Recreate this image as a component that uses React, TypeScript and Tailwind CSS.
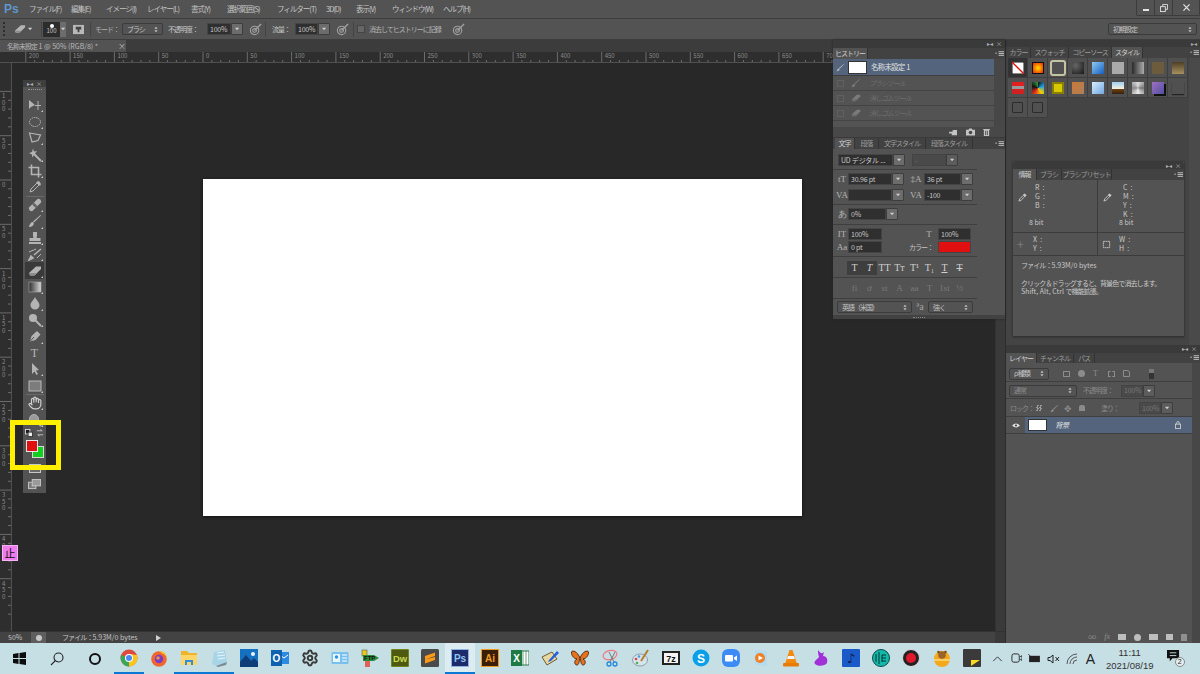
import React from "react";
import { Hand, Settings } from "lucide-react";

const J = "text-[7px] tracking-[-1px]";
const L = "tracking-[0px]";

function Caret() {
  return <svg viewBox="0 0 6 4" className="w-[5px] h-[4px]"><path d="M0 0.5 L5 0.5 L2.5 3.5Z" fill="#d0d0d0" /></svg>;
}
function Updown() {
  return (
    <svg viewBox="0 0 5 8" className="w-[4px] h-[7px] shrink-0">
      <path d="M0.5 3 L2.5 0.5 L4.5 3Z M0.5 5 L2.5 7.5 L4.5 5Z" fill="#c8c8c8" />
    </svg>
  );
}
function Chev() {
  return (
    <div className="flex items-center gap-[3px] text-[6px] leading-none text-[#b0b0b0]">
      <span>▸◂</span>
      <span>×</span>
    </div>
  );
}
function PanelMenu() {
  return (
    <svg viewBox="0 0 10 6" className="w-[9px] h-[6px]">
      <path d="M0 1.5 L2.5 1.5 L1.2 3Z" fill="#ccc" />
      <path d="M4 0.5 H10 M4 2.5 H10 M4 4.5 H10" stroke="#ccc" strokeWidth="1" />
    </svg>
  );
}

function EraserIcon({ className }: { className: string }) {
  return (
    <svg viewBox="0 0 14 14" className={className}>
      <path d="M1 9 L8 2.5 L13 2.5 L13 5 L6.5 11.5 L2 11.5Z" fill="#b4b4b4" />
      <path d="M1 9 L2.5 11.5 L6.5 11.5 L9 9Z" fill="#8d8d8d" />
    </svg>
  );
}
function BrushIcon({ className }: { className: string }) {
  return (
    <svg viewBox="0 0 14 14" className={className}>
      <path d="M12.5 1 L13 1.5 L6 8.5 L5 7.5Z" fill="#b8b8b8" />
      <path d="M1 13 C1.5 10 3 8 4.8 8 L5.8 9 C6 11 4 13 1 13Z" fill="#b8b8b8" />
    </svg>
  );
}
function TargetBrush() {
  return (
    <svg viewBox="0 0 14 14" className="w-[13px] h-[13px]" fill="none" stroke="#a0a0a0" strokeWidth="1.2">
      <circle cx="6" cy="8" r="4.5" />
      <circle cx="6" cy="8" r="2" />
      <path d="M6 8 L13 1" strokeWidth="1.5" />
    </svg>
  );
}

const g = "#b4b4b4";
const tools: React.ReactNode[] = [
  <svg key="0" viewBox="0 0 14 14" className="w-[14px] h-[14px]"><path d="M1 2 L1 11 L3 9 L7 7Z" fill={g} /><path d="M10 3 V12 M7 7.5 H13" stroke={g} /></svg>,
  <svg key="1" viewBox="0 0 14 14" className="w-[14px] h-[14px]"><ellipse cx="7" cy="7" rx="5.5" ry="4.5" fill="none" stroke={g} strokeDasharray="1.5 0.7" /></svg>,
  <svg key="2" viewBox="0 0 14 14" className="w-[14px] h-[14px]"><path d="M1.5 2 L12.5 4 L10 9.5 L4 11 Z" fill="none" stroke={g} strokeWidth="1.2" /></svg>,
  <svg key="3" viewBox="0 0 14 14" className="w-[14px] h-[14px]"><path d="M6 6 L13 13" stroke={g} strokeWidth="2" /><path d="M5 0.5 L6 3.5 L9 3 L7 5.5 L9 8 L6 7 L4 9.5 L4 6.5 L1 5 L4 4Z" fill={g} /></svg>,
  <svg key="4" viewBox="0 0 14 14" className="w-[14px] h-[14px]"><path d="M3.5 0.5 V10.5 H13.5 M0.5 3.5 H10.5 V13.5" fill="none" stroke={g} strokeWidth="1.6" /></svg>,
  <svg key="5" viewBox="0 0 14 14" className="w-[14px] h-[14px]"><path d="M2 12 L3 9 L9 3 L11 5 L5 11Z" fill="none" stroke={g} /><path d="M8 2 L12 6 L13 4 L11 1Z" fill={g} /></svg>,
  <svg key="6" viewBox="0 0 14 14" className="w-[14px] h-[14px]"><path d="M1 9.5 L9.5 1 Q11 0.5 12.5 1.8 Q13.5 3.2 13 4.5 L4.5 13 Q3 13.5 1.5 12.2 Q0.5 11 1 9.5Z" fill={g} /><path d="M5 5.5 L8.5 9" stroke="#666" strokeWidth="2.5" /></svg>,
  <BrushIcon key="7" className="w-[14px] h-[14px]" />,
  <svg key="8" viewBox="0 0 14 14" className="w-[14px] h-[14px]"><path d="M5 1 H9 V5 L8.5 7 H12.5 V10 H1.5 V7 H5.5 L5 5Z M1 11 H13 V13 H1Z" fill={g} /></svg>,
  <svg key="9" viewBox="0 0 14 14" className="w-[14px] h-[14px]"><path d="M1 13 L3 9 L5 11Z M6 8 L13 2" stroke={g} strokeWidth="1.6" fill={g} /><path d="M1 5 L8 2 M9 11 L13 7" stroke={g} /></svg>,
  <EraserIcon key="10" className="w-[14px] h-[14px]" />,
  <svg key="11" viewBox="0 0 14 14" className="w-[14px] h-[14px]"><defs><linearGradient id="tg"><stop offset="0" stopColor="#2f2f2f" /><stop offset="1" stopColor="#d8d8d8" /></linearGradient></defs><rect x="1" y="2" width="12" height="10" fill="url(#tg)" stroke="#aaa" strokeWidth="0.6" /></svg>,
  <svg key="12" viewBox="0 0 14 14" className="w-[14px] h-[14px]"><path d="M7 1 C8 4 11.5 6 11.5 9 A4.5 4.5 0 0 1 2.5 9 C2.5 6 6 4 7 1Z" fill={g} /></svg>,
  <svg key="13" viewBox="0 0 14 14" className="w-[14px] h-[14px]"><circle cx="5" cy="5" r="4" fill={g} /><path d="M7 7 L13 13" stroke={g} strokeWidth="2" /></svg>,
  <svg key="14" viewBox="0 0 14 14" className="w-[14px] h-[14px]"><path d="M2 12.5 L3.5 7 L9 2 L12.5 5.5 L7.5 11Z" fill={g} /><path d="M2 12.5 L6 8" stroke="#555" /></svg>,
  <span key="15" className="text-[12px] leading-none text-[#b4b4b4] [font-family:'Liberation_Serif',serif]">T</span>,
  <svg key="16" viewBox="0 0 14 14" className="w-[14px] h-[14px]"><path d="M4 1 L4 12 L6.5 9.5 L8.5 13 L10 12 L8 8.5 L11 8Z" fill={g} /></svg>,
  <svg key="17" viewBox="0 0 14 14" className="w-[14px] h-[14px]"><rect x="1" y="2" width="12" height="10" fill="#7c7c7c" stroke="#b8b8b8" /></svg>,
  <Hand key="18" className="w-[14px] h-[14px]" color="#d0d0d0" strokeWidth={2} />,
  <svg key="19" viewBox="0 0 14 14" className="w-[14px] h-[14px]"><circle cx="6" cy="6" r="4.5" fill="#9a9a9a" stroke={g} /><path d="M9 9 L13 13" stroke={g} strokeWidth="2" /></svg>,
];

function Toolbar() {
  return (
    <div className="absolute left-[23px] top-[80px] w-[23px] h-[413px] bg-[#535353] flex flex-col items-center">
      <div className="w-full h-[7px] bg-[#3e3e3e] flex items-center justify-center"><Chev /></div>
      <div className="w-[14px] h-[2px] mt-[2px] mb-[6px] border-t border-dotted border-[#999]" />
      {tools.map((t, i) => (
        <React.Fragment key={i}>
          {i === 6 || i === 18 ? <div className="w-[18px] h-0 border-t border-[#6a6a6a]" /> : null}
          <div className={i === 10 ? "relative w-[19px] h-[16.45px] flex items-center justify-center bg-[#3a3a3a] rounded-[1px]" : "relative w-[19px] h-[16.45px] flex items-center justify-center"}>
            {t}
            {i !== 5 && i !== 15 ? <div className="absolute right-[1px] bottom-[1px] w-0 h-0 border-l-[2px] border-l-transparent border-b-[2px] border-b-[#ccc]" /> : null}
          </div>
        </React.Fragment>
      ))}
      <div className="w-full h-[9px] mt-[1px] flex items-center justify-between px-[2px]">
        <svg viewBox="0 0 9 9" className="w-[8px] h-[8px]"><rect x="0.5" y="0.5" width="5" height="5" fill="#1b1b1b" stroke="#ddd" /><rect x="3.5" y="3.5" width="5" height="5" fill="#eee" stroke="#333" /></svg>
        <svg viewBox="0 0 9 9" className="w-[8px] h-[8px]" fill="none" stroke="#c8c8c8"><path d="M1 2 H7 L5 0.5 M8 6.5 H2 L4 8" /></svg>
      </div>
      <div className="relative w-full h-[24px] mt-[1px]">
        <div className="absolute left-[9px] top-[7px] w-[12px] h-[12px] bg-[#12d01e] border border-[#d8d8d8]" />
        <div className="absolute left-[3px] top-[1px] w-[12px] h-[12px] bg-[#e01010] border border-[#e8e8e8]" />
      </div>
      <div className="w-[12px] h-[9px] mt-[1px] bg-[#6a6a6a] border border-[#c8c8c8] flex items-center justify-center">
        <div className="w-[4px] h-[4px] rounded-full bg-[#d0d0d0]" />
      </div>
      <svg viewBox="0 0 14 12" className="w-[13px] h-[11px] mt-[6px]"><rect x="0.5" y="3.5" width="8" height="7" fill="#7d7d7d" stroke="#c8c8c8" /><rect x="4.5" y="0.5" width="9" height="7" fill="#9a9a9a" stroke="#c8c8c8" /></svg>
    </div>
  );
}

function Field({ w, text, btn = true, dis = false }: { w: string; text?: string; btn?: boolean; dis?: boolean }) {
  return (
    <div className="flex h-[12px] shrink-0">
      <div className={w + (dis ? " bg-[#4a4a4a] text-[#777] " : " bg-[#2f2f2f] text-[#c8c8c8] ") + "border border-[#444] flex items-center pl-[2px] text-[7px] tracking-[-0.2px] leading-none whitespace-nowrap overflow-hidden"}>{text}</div>
      {btn ? <div className={(dis ? "bg-[#5c5c5c] " : "bg-[#6c6c6c] ") + "w-[12px] border border-[#3d3d3d] rounded-r-[1px] flex items-center justify-center"}><Caret /></div> : null}
    </div>
  );
}
function Select({ w, text, dis = false }: { w: string; text: string; dis?: boolean }) {
  return (
    <div className={w + (dis ? " text-[#8a8a8a] " : " text-[#c4c4c4] ") + "h-[12px] bg-[#535353] border border-[#3b3b3b] rounded-[2px] flex items-center justify-between px-[4px] text-[7px] tracking-[-1px] leading-none whitespace-nowrap"}>
      <span>{text}</span>
      <Updown />
    </div>
  );
}
const Sep = ({ m }: { m: string }) => <div className={m + " w-[144px] h-[1px] bg-[#3f3f3f]"} />;
const Glyph = ({ t, cls = "" }: { t: string; cls?: string }) => (
  <span className={cls + " w-[12px] text-center text-[9px] leading-none text-[#b4b4b4] [font-family:'Liberation_Serif',serif]"}>{t}</span>
);

function Tab({ t, on = false, cls = "" }: { t: string; on?: boolean; cls?: string }) {
  return (
    <div className={cls + (on ? " bg-[#535353] text-[#cfcfcf] " : " bg-[#424242] text-[#9a9a9a] ") + "h-full flex items-center justify-center border-r border-[#333] text-[7px] tracking-[-1px] leading-none whitespace-nowrap"}>
      {t}
    </div>
  );
}

function HistRow({ t, icon }: { t: string; icon: React.ReactNode }) {
  return (
    <div className={J + " h-[15px] flex items-center border-b border-[#444] italic text-[#6e6e6e]"}>
      <div className="ml-[4px] w-[7px] h-[7px] border border-[#606060] mr-[7px]" />
      <div className="w-[10px] h-[10px] flex items-center justify-center opacity-40">{icon}</div>
      <span className="ml-[8px]">{t}</span>
    </div>
  );
}

function HistoryChar() {
  const ts = ["T", "T", "TT", "Tт", "T¹", "T₁", "T", "T"];
  const lg = ["fi", "ơ", "st", "A", "aa", "T", "1st", "½"];
  return (
    <div className="absolute left-[833px] top-[40px] w-[172px] h-[279px] bg-[#535353] flex flex-col shadow-[0_0_2px_#222]">
      <div className="h-[8px] bg-[#3a3a3a] flex items-center justify-end pr-[3px]"><Chev /></div>
      <div className="h-[11px] bg-[#424242] flex items-center">
        <Tab t="ヒストリー" on cls="w-[35px]" />
        <div className="ml-auto mr-[1px]"><PanelMenu /></div>
      </div>
      <div className="h-[68px] flex">
        <div className="w-[161px]">
          <div className="h-[17px] bg-[#53647c] flex items-center border-b border-[#3e3e3e]">
            <BrushIcon className="ml-[3px] w-[9px] h-[9px]" />
            <div className="ml-[3px] w-[19px] h-[13px] bg-white border border-[#333]" />
            <span className="ml-[4px] text-[7.5px] tracking-[-0.8px] text-[#e0e0e0] leading-none">名称未設定<span className={L}> 1</span></span>
          </div>
          <HistRow t="ブラシツール" icon={<BrushIcon className="w-[10px] h-[10px]" />} />
          <HistRow t="消しゴムツール" icon={<EraserIcon className="w-[10px] h-[10px]" />} />
          <HistRow t="消しゴムツール" icon={<EraserIcon className="w-[10px] h-[10px]" />} />
        </div>
        <div className="flex-1 bg-[#474747]" />
      </div>
      <div className="h-[10px] bg-[#484848] flex items-center justify-end gap-[8px] pr-[15px]">
        <svg viewBox="0 0 10 8" className="w-[9px] h-[7px]"><path d="M0 3 L4 3 L4 1 L9 1 L9 7 L3 7 L3 5 L0 5Z" fill="#c4c4c4" /></svg>
        <svg viewBox="0 0 10 8" className="w-[9px] h-[8px]"><path d="M0 1.5 H3 L3.5 0 H6.5 L7 1.5 H10 V8 H0Z" fill="#c4c4c4" /><circle cx="5" cy="4.5" r="2" fill="#484848" /></svg>
        <svg viewBox="0 0 8 9" className="w-[7px] h-[8px]"><path d="M0 1 H8 V2 H7 V9 H1 V2 H0Z" fill="#c4c4c4" /><path d="M3 3 V8 M5 3 V8" stroke="#484848" /></svg>
      </div>
      <div className="h-[12px] bg-[#424242] flex items-center border-t border-[#3a3a3a]">
        <Tab t="文字" on cls="w-[20px] ml-[2px]" />
        <Tab t="段落" cls="w-[24px]" />
        <Tab t="文字スタイル" cls="w-[47px]" />
        <Tab t="段落スタイル" cls="w-[47px]" />
        <div className="ml-auto mr-[1px]"><PanelMenu /></div>
      </div>
      <div className="flex ml-[5px] mt-[5px]">
        <Field w="w-[55px]" text="UD デジタル ..." />
        <div className="ml-[7px]"><Field w="w-[34px]" text="-" dis /></div>
      </div>
      <Sep m="mt-[3px]" />
      <div className="flex items-center mt-[3px] ml-[3px]">
        <Glyph t="tT" />
        <Field w="w-[44px]" text="30.96 pt" />
        <Glyph t="‡A" cls="ml-[6px]" />
        <div className="ml-[2px]"><Field w="w-[37px]" text="36 pt" /></div>
      </div>
      <div className="flex items-center mt-[4px] ml-[3px]">
        <Glyph t="VA" />
        <Field w="w-[44px]" />
        <Glyph t="VA" cls="ml-[6px]" />
        <div className="ml-[2px]"><Field w="w-[37px]" text="-100" /></div>
      </div>
      <Sep m="mt-[3px]" />
      <div className="flex items-center mt-[3px] ml-[3px]">
        <Glyph t="あ" />
        <Field w="w-[38px]" text="0%" />
      </div>
      <Sep m="mt-[4px]" />
      <div className="flex items-center mt-[3px] ml-[3px]">
        <Glyph t="IT" />
        <Field w="w-[34px]" text="100%" btn={false} />
        <Glyph t="T" cls="ml-[41px]" />
        <div className="ml-[3px]"><Field w="w-[33px]" text="100%" btn={false} /></div>
      </div>
      <div className="flex items-center mt-[1px] ml-[3px]">
        <Glyph t="Aa" />
        <Field w="w-[34px]" text="0 pt" btn={false} />
        <span className={J + " ml-[27px] w-[25px] text-[#c4c4c4] leading-none whitespace-nowrap"}>カラー：</span>
        <div className="ml-[4px] w-[33px] h-[12px] bg-[#e01010] border border-[#444]" />
      </div>
      <Sep m="mt-[3px]" />
      <div className="flex items-center ml-[14px] mt-[4px] h-[14px]">
        {ts.map((t, i) => (
          <div key={i} className={(i < 2 ? "bg-[#3e3e3e] " : "") + (i === 1 ? "italic " : "") + (i === 6 ? "underline " : "") + (i === 7 ? "line-through " : "") + "w-[15px] h-[14px] flex items-center justify-center text-[10px] leading-none text-[#cfcfcf] [font-family:'Liberation_Serif',serif]"}>{t}</div>
        ))}
      </div>
      <Sep m="mt-[2px]" />
      <div className="flex items-center ml-[14px] mt-[3px] h-[14px]">
        {lg.map((t, i) => (
          <div key={i} className="w-[15px] flex items-center justify-center text-[9px] leading-none text-[#7a7a7a] [font-family:'Liberation_Serif',serif]">{t}</div>
        ))}
      </div>
      <Sep m="mt-[3px]" />
      <div className="flex items-center mt-[2px] ml-[4px]">
        <Select w="w-[75px]" text="英語（米国）" />
        <span className="w-[16px] text-center text-[8px] text-[#aaa] leading-none">ªa</span>
        <Select w="w-[45px]" text="強く" />
      </div>
      <div className="mt-auto h-[4px] bg-[#424242] flex items-center justify-center">
        <div className="w-[12px] border-t border-dotted border-[#888]" />
      </div>
    </div>
  );
}

const swatchCls = [
  "",
  "bg-[radial-gradient(circle,#ffe000,#f02000)] border border-[#111]",
  "",
  "bg-[radial-gradient(circle_at_30%_30%,#666,#181818)]",
  "bg-[linear-gradient(135deg,#90c8f0,#1560c0)]",
  "bg-[#aaaaaa]",
  "bg-[linear-gradient(90deg,#2a2a2a,#aaaaaa)]",
  "bg-[#6c5b3c]",
  "bg-[linear-gradient(180deg,#4e3f24,#a89060)]",
  "bg-[linear-gradient(180deg,#e02020_0%,#e02020_35%,#999_35%,#999_55%,#d02020_55%)]",
  "bg-[conic-gradient(#111,#20a0e0,#f0d000,#e03020,#111,#30a040)]",
  "bg-[#d8c800] border-2 border-[#8a8000]",
  "bg-[linear-gradient(135deg,#c87838,#b08058)]",
  "bg-[linear-gradient(135deg,#d8ecfa,#70a8e0)]",
  "bg-[linear-gradient(180deg,#a0d0f0_0%,#f0f0e0_55%,#704010_60%,#302010_100%)]",
  "bg-[conic-gradient(#ddd,#777,#eee,#888,#ddd)]",
  "bg-[linear-gradient(135deg,#a070c0,#5050a0)] shadow-[2px_2px_0_#111]",
  "bg-[#505050] shadow-[0_1px_1px_#222]",
];

function Styles() {
  return (
    <div className="grid grid-cols-[repeat(9,20px)] auto-rows-[20px] ml-[2px]">
      {swatchCls.map((c, i) => (
        <div key={i} className={(i === 0 ? "bg-[#333] " : "bg-[#505050] ") + "border-r border-b border-[#3e3e3e] flex items-center justify-center"}>
          {i === 0 ? (
            <svg viewBox="0 0 12 12" className="w-[12px] h-[12px]">
              <rect width="12" height="12" fill="#fff" stroke="#111" />
              <path d="M-1 -1 L13 13" stroke="#e01010" strokeWidth="1.3" />
            </svg>
          ) : i === 2 ? (
            <div className="w-[16px] h-[16px] rounded-[3px] border-2 border-[#c4c4a4]" />
          ) : (
            <div className={c + " w-[12px] h-[12px]"} />
          )}
        </div>
      ))}
      <div className="bg-[#505050] border-r border-b border-[#3e3e3e] flex items-center justify-center"><div className="w-[11px] h-[11px] rounded-[1px] border border-[#2c2c2c]" /></div>
      <div className="bg-[#505050] border-r border-b border-[#3e3e3e] flex items-center justify-center"><div className="w-[11px] h-[11px] rounded-[1px] border border-[#2c2c2c]" /></div>
    </div>
  );
}

function Picker() {
  return (
    <svg viewBox="0 0 10 10" className="w-[9px] h-[9px]"><path d="M1 9 L2 6.5 L6 2.5 L7.5 4 L3.5 8Z" fill="none" stroke="#c8c8c8" /><path d="M5.5 2 L8 4.5 L9.5 2.5 L7.5 0.5Z" fill="#c8c8c8" /></svg>
  );
}
function Letters({ ls, cls }: { ls: string[]; cls: string }) {
  return (
    <div className={cls + " flex flex-col text-[7px] leading-[9px] text-[#c8c8c8]"}>
      {ls.map((l) => <span key={l}>{l}&nbsp;&nbsp;:</span>)}
    </div>
  );
}

function Info() {
  return (
    <div className="absolute left-[1013px] top-[162px] w-[171px] h-[175px] bg-[#535353] flex flex-col border-b border-[#333] shadow-[0_0_2px_#222]">
      <div className="h-[7px] bg-[#3a3a3a] flex items-center justify-end pr-[3px] rounded-t-[2px]"><Chev /></div>
      <div className="h-[11px] bg-[#424242] flex items-center">
        <Tab t="情報" on cls="w-[24px]" />
        <Tab t="ブラシ" cls="w-[25px]" />
        <Tab t="ブラシプリセット" cls="w-[50px]" />
        <div className="ml-auto mr-[1px]"><PanelMenu /></div>
      </div>
      <div className="grid grid-cols-[85px_86px] h-[53px] border-b border-[#3c3c3c]">
        <div className="border-r border-[#3c3c3c] relative flex">
          <div className="ml-[5px] mt-[13px]"><Picker /></div>
          <div className="ml-[7px] mt-[3px] flex flex-col">
            <Letters ls={["R", "G", "B"]} cls="ml-[1px]" />
            <span className="text-[7px] leading-none mt-[9px] -ml-[5px] text-[#c8c8c8]">8 bit</span>
          </div>
        </div>
        <div className="flex">
          <div className="ml-[5px] mt-[13px]"><Picker /></div>
          <div className="ml-[7px] mt-[3px] flex flex-col">
            <Letters ls={["C", "M", "Y", "K"]} cls="ml-[4px]" />
            <span className="text-[7px] leading-none mt-[0px] text-[#c8c8c8]">8 bit</span>
          </div>
        </div>
      </div>
      <div className="grid grid-cols-[85px_86px] h-[23px] border-b border-[#3c3c3c]">
        <div className="border-r border-[#3c3c3c] flex items-center">
          <span className="ml-[4px] w-[14px] text-[#7c7c7c] text-[12px] leading-none">+</span>
          <Letters ls={["X", "Y"]} cls="ml-[2px]" />
        </div>
        <div className="flex items-center">
          <svg viewBox="0 0 10 10" className="ml-[4px] w-[9px] h-[9px]" fill="none" stroke="#c8c8c8"><path d="M1.5 1.5 H8.5 V8.5 H1.5Z" strokeDasharray="2 0.5" /></svg>
          <Letters ls={["W", "H"]} cls="ml-[8px]" />
        </div>
      </div>
      <div className="pl-[8px] pt-[5px] text-[7px] tracking-[-0.9px] leading-[8px] text-[#c8c8c8] whitespace-nowrap">
        <div>ファイル：<span className={L}>5.93M/0 bytes</span></div>
        <div className="mt-[10px]">クリック＆ドラッグすると、背景色で消去します。</div>
        <div><span className={L}>Shift, Alt, Ctrl </span>で機能拡張。</div>
      </div>
    </div>
  );
}

function FilterIcons() {
  return (
    <div className="flex items-center ml-[14px] gap-[8px]">
      <div className="w-[7px] h-[6px] border border-[#8c8c8c]" />
      <div className="w-[7px] h-[7px] rounded-full bg-[#8c8c8c]" />
      <span className="w-[7px] text-[8px] leading-none text-[#8c8c8c] [font-family:'Liberation_Serif',serif]">T</span>
      <div className="w-[7px] h-[6px] border border-dashed border-[#8c8c8c]" />
      <div className="w-[7px] h-[7px] border border-[#8c8c8c] rounded-tr-[3px]" />
    </div>
  );
}

function Layers() {
  return (
    <div className="flex-1 flex flex-col bg-[#535353] min-h-0">
      <div className="h-[8px] bg-[#3a3a3a] flex items-center justify-end pr-[3px]"><Chev /></div>
      <div className="h-[10px] bg-[#424242] flex items-center">
        <Tab t="レイヤー" on cls="w-[31px]" />
        <Tab t="チャンネル" cls="w-[37px]" />
        <Tab t="パス" cls="w-[21px]" />
        <div className="ml-auto mr-[1px]"><PanelMenu /></div>
      </div>
      <div className="flex flex-1 min-h-0">
        <div className="w-[186px] flex flex-col">
          <div className="flex items-center h-[19px] pl-[3px] pt-[3px] border-b border-[#3f3f3f]">
            <Select w="w-[40px]" text="ρ 種類" />
            <FilterIcons />
            <div className="ml-[19px] w-[5px] h-[10px] bg-[#333] border-t-4 border-[#777]" />
          </div>
          <div className="flex items-center h-[17px] pl-[3px] pt-[1px] border-b border-[#3f3f3f]">
            <Select w="w-[68px]" text="通常" dis />
            <span className={J + " ml-[6px] text-[#8a8a8a] leading-none w-[38px] whitespace-nowrap"}>不透明度：</span>
            <Field w="w-[22px]" text="100%" dis />
          </div>
          <div className="flex items-center h-[18px] pl-[4px] pt-[1px] border-b border-[#3f3f3f] text-[#8a8a8a]">
            <span className={J + " leading-none w-[22px] whitespace-nowrap"}>ロック：</span>
            <div className="ml-[4px] w-[6px] h-[6px] bg-[conic-gradient(#999_25%,#555_0_50%,#999_0_75%,#555_0)] bg-[length:3px_3px]" />
            <div className="ml-[8px]"><BrushIcon className="w-[9px] h-[9px] opacity-60" /></div>
            <span className="ml-[5px] text-[9px] leading-none">✥</span>
            <span className="ml-[7px] w-[6px] h-[6px] bg-[#8a8a8a] rounded-t-[2px]" />
            <span className={J + " ml-[16px] w-[25px] leading-none whitespace-nowrap"}>塗り：</span>
            <div className="ml-[13px]"><Field w="w-[22px]" text="100%" dis /></div>
          </div>
          <div className="h-[17px] flex items-center border-b border-[#3f3f3f]">
            <div className="w-[19px] flex justify-center">
              <svg viewBox="0 0 10 6" className="w-[8px] h-[5px]"><path d="M0 3 Q5 -2 10 3 Q5 8 0 3Z" fill="#ddd" /><circle cx="5" cy="3" r="1.3" fill="#444" /></svg>
            </div>
            <div className="flex-1 h-full bg-[#53647c] flex items-center">
              <div className="ml-[3px] w-[19px] h-[12px] bg-white border border-[#333]" />
              <span className="ml-[8px] text-[7.5px] tracking-[-0.8px] leading-none italic text-[#e0e0e0]">背景</span>
              <svg viewBox="0 0 7 9" className="ml-auto mr-[11px] w-[6px] h-[8px]" fill="none" stroke="#d0d0d0"><rect x="0.5" y="3.5" width="6" height="5" /><path d="M2 3.5 V2 A1.5 1.5 0 0 1 5 2 V3.5" /></svg>
            </div>
          </div>
          <div className="flex-1" />
          <div className="h-[12px] flex items-center justify-end gap-[8px] pr-[5px] text-[#8f8f8f] text-[8px] leading-none">
            <span>∞</span>
            <span className="italic [font-family:'Liberation_Serif',serif]">fx</span>
            <div className="w-[8px] h-[6px] bg-[#bdbdbd]" />
            <div className="w-[7px] h-[7px] rounded-full bg-[#bdbdbd]" />
            <div className="w-[9px] h-[6px] bg-[#bdbdbd]" />
            <div className="w-[7px] h-[6px] bg-[#bdbdbd]" />
            <div className="w-[6px] h-[7px] bg-[#8f8f8f]" />
          </div>
        </div>
        <div className="flex-1 bg-[#474747]" />
      </div>
    </div>
  );
}

function HRuler() {
  const items = Array.from({ length: 19 }, (_, i) => i - 4);
  return (
    <svg className="block w-[994px] h-[10px]" viewBox="0 0 994 10">
      {items.map((k) => {
        const x = 192 + k * 44.3;
        const minor = [1, 2, 3, 4].map((m) => x + m * 8.86);
        return (
          <g key={k}>
            <path d={`M${x} 0 V10`} stroke="#6c6c6c" />
            {minor.map((mx) => <path key={mx} d={`M${mx} 8 V10`} stroke="#6c6c6c" />)}
            <text x={x + 3} y={6} fontSize="6" fill="#8c8c8c">{Math.abs(k * 50)}</text>
          </g>
        );
      })}
    </svg>
  );
}
function VRuler() {
  const items = Array.from({ length: 12 }, (_, i) => i - 2);
  return (
    <svg className="block w-[11px] h-[568px] shrink-0" viewBox="0 0 11 568">
      {items.map((k) => {
        const y = 117 + k * 44.3;
        const s = String(Math.abs(k * 50));
        return (
          <g key={k}>
            <path d={`M0 ${y} H11`} stroke="#6c6c6c" />
            {[1, 2, 3, 4].map((m) => <path key={m} d={`M8 ${y + m * 8.86} H11`} stroke="#6c6c6c" />)}
            <text fontSize="6" fill="#8c8c8c">
              {s.split("").map((c, i) => (
                <tspan key={i} x={2} y={y + 7 + i * 6.5}>{c}</tspan>
              ))}
            </text>
          </g>
        );
      })}
    </svg>
  );
}

function Options() {
  return (
    <div className={J + " h-[22px] bg-[#535353] border-t border-[#3d3d3d] border-b flex items-center leading-none text-[#c4c4c4] whitespace-nowrap"}>
      <div className="ml-[3px] w-[2px] h-[14px] border-l-2 border-dotted border-[#2d2d2d]" />
      <EraserIcon className="ml-[9px] w-[12px] h-[12px]" />
      <div className="ml-[2px]"><Caret /></div>
      <div className="ml-[8px] w-[1px] h-[15px] bg-[#444]" />
      <div className="ml-[1px] w-[17px] h-[15px] bg-[#2c2c2c] flex flex-col items-center justify-center">
        <div className="w-[4px] h-[4px] rounded-full bg-white" />
        <span className="text-[6px] tracking-normal leading-none">100</span>
      </div>
      <div className="w-[6px] h-[15px] bg-[#6c6c6c] flex items-center justify-center"><Caret /></div>
      <svg viewBox="0 0 12 12" className="ml-[7px] w-[11px] h-[11px]"><path d="M0 1 H12 V11 H0Z" fill="#b8b8b8" /><path d="M3 3 H9 V6 H7 V9 H5 V6 H3Z" fill="#444" /></svg>
      <div className="ml-[6px] w-[1px] h-[15px] bg-[#444]" />
      <span className="ml-[4px] w-[27px] text-[#b0b0b0]">モード：</span>
      <Select w="w-[41px]" text="ブラシ" />
      <span className="ml-[5px] w-[39px]">不透明度：</span>
      <Field w="w-[24px]" text="100%" />
      <div className="ml-[6px]"><TargetBrush /></div>
      <div className="ml-[3px] w-[1px] h-[15px] bg-[#444]" />
      <span className="ml-[6px] w-[23px]">流量：</span>
      <Field w="w-[23px]" text="100%" />
      <div className="ml-[6px]"><TargetBrush /></div>
      <div className="ml-[4px] w-[1px] h-[15px] bg-[#444]" />
      <div className="ml-[3px] w-[8px] h-[8px] bg-[#666] border border-[#444]" />
      <span className="ml-[4px] w-[75px] text-[#b4b4b4]">消去してヒストリーに記録</span>
      <div className="ml-[8px]"><TargetBrush /></div>
      <div className="ml-auto mr-[3px]"><Select w="w-[89px]" text="初期設定" /></div>
    </div>
  );
}

const menus = [
  ["ファイル(F)", "w-[42px]"],
  ["編集(E)", "w-[35px]"],
  ["イメージ(I)", "w-[41px]"],
  ["レイヤー(L)", "w-[44px]"],
  ["書式(Y)", "w-[36px]"],
  ["選択範囲(S)", "w-[50px]"],
  ["フィルター(T)", "w-[49px]"],
  ["3D(D)", "w-[30px]"],
  ["表示(V)", "w-[36px]"],
  ["ウィンドウ(W)", "w-[51px]"],
  ["ヘルプ(H)", "w-[40px]"],
];

function MenuBar() {
  return (
    <div className="h-[18px] bg-[#535353] flex items-center text-[7.5px] tracking-[-1px] leading-none text-[#c4c4c4] whitespace-nowrap">
      <span className="ml-[4px] w-[25px] text-[12px] tracking-normal font-bold text-[#5f96cc] leading-none [font-family:'Liberation_Sans',sans-serif]">Ps</span>
      {menus.map(([m, w]) => <span key={m} className={w}>{m}</span>)}
      <div className="ml-auto h-[16px] mb-[2px] flex border border-t-0 border-[#3c3c3c] rounded-b-[2px] text-[#e4e4e4]">
        <div className="w-[18px] flex items-center justify-center border-r border-[#3c3c3c]"><div className="w-[6px] h-[2px] mt-[4px] bg-[#e4e4e4]" /></div>
        <div className="w-[18px] flex items-center justify-center border-r border-[#3c3c3c]">
          <svg viewBox="0 0 9 9" className="w-[8px] h-[8px]" fill="none" stroke="#e4e4e4"><rect x="0.5" y="3" width="5.5" height="5.5" /><path d="M3 3 V0.5 H8.5 V6 H6" /></svg>
        </div>
        <div className="w-[26px] flex items-center justify-center">
          <svg viewBox="0 0 8 8" className="w-[7px] h-[7px]" stroke="#e4e4e4" strokeWidth="1.4"><path d="M0.5 0.5 L7.5 7.5 M7.5 0.5 L0.5 7.5" /></svg>
        </div>
      </div>
    </div>
  );
}

const S = "w-[18px] h-[18px]";
const task: [React.ReactNode, boolean][] = [
  [<svg key="c" viewBox="0 0 18 18" className={S}><circle cx="9" cy="9" r="8.5" fill="#dd4b3e" /><path d="M9 9 L2 13.5 A8.5 8.5 0 0 0 9 17.5Z M2 13.5 A8.5 8.5 0 0 1 1 6 L9 9Z" fill="#3aa757" /><path d="M9 9 L9 17.5 A8.5 8.5 0 0 0 17 6 L9 5Z" fill="#f8c41e" /><circle cx="9" cy="9" r="4" fill="#fff" /><circle cx="9" cy="9" r="3" fill="#4a8af4" /></svg>, true],
  [<svg key="f" viewBox="0 0 18 18" className={S}><circle cx="9" cy="10" r="7.8" fill="#f0662c" /><path d="M9 2 Q17 2 16.8 10 Q16 5 12 4.5Z" fill="#ffc233" /><circle cx="9" cy="10" r="4.2" fill="#7a3bc8" /><circle cx="8" cy="9" r="1.8" fill="#f09040" /></svg>, false],
  [<svg key="e" viewBox="0 0 18 18" className={S}><path d="M1 2 H7 L9 4 H17 V7 H1Z" fill="#f0b429" /><path d="M1 6 H17 V16 H1Z" fill="#ffd568" /><path d="M5 11 H13 V16 H11 V13 H7 V16 H5Z" fill="#2f8fd8" /></svg>, true],
  [<svg key="n" viewBox="0 0 18 18" className={S}><path d="M4 3 L15 1 L17 13 L6 17 L2 15Z" fill="#a8d4e8" /><path d="M7 4 L14 3 M7 7 L15 6 M8 10 L15 9" stroke="#e8f6fa" /><path d="M6 17 L17 13 L16 16 L8 18Z" fill="#7a8a90" /></svg>, true],
  [<svg key="p" viewBox="0 0 18 18" className={S}><rect width="18" height="18" fill="#1670c0" /><path d="M0 18 L0 13 L6 6 L11 12 L14 9 L18 13 L18 18Z" fill="#0e3d78" /><circle cx="13" cy="5" r="2" fill="#e8f4ff" /></svg>, false],
  [<svg key="o" viewBox="0 0 18 18" className={S}><rect x="7" y="3" width="11" height="12" fill="#2c8ae0" /><path d="M9 6 L13 9 L17 6" stroke="#fff" fill="none" /><rect x="0" y="1" width="11" height="16" fill="#0f62b0" /><text x="5.5" y="13" fontSize="10" fontWeight="700" textAnchor="middle" fill="#fff" fontFamily="Liberation Sans">O</text></svg>, false],
  [<Settings key="g" className={S} color="#3a3a3a" strokeWidth={2.6} />, false],
  [<svg key="k" viewBox="0 0 18 18" className={S}><rect x="0.5" y="3" width="17" height="12" rx="1" fill="#78c0ee" /><rect x="2" y="5" width="7" height="8" fill="#e8f6ff" /><circle cx="5.5" cy="8" r="1.7" fill="#3090d8" /><path d="M11 6 H16 M11 9 H16 M11 12 H16" stroke="#fff" /></svg>, false],
  [<svg key="t" viewBox="0 0 18 18" className={S}><rect x="1" y="1" width="5" height="6" fill="#e8c820" stroke="#444" strokeWidth="0.5" /><path d="M2 6 H13 L18 9 L13 12 H2Z" fill="#2c8c3a" /><text x="3" y="11" fontSize="6" fontWeight="700" fill="#111" fontFamily="Liberation Sans">FTP</text><rect x="4" y="12" width="5" height="6" fill="#e0605c" /></svg>, false],
  [<svg key="d" viewBox="0 0 18 18" className={S}><rect width="18" height="18" rx="1" fill="#4d5a10" stroke="#9aaa30" /><text x="9" y="13" fontSize="9.5" fontWeight="700" textAnchor="middle" fill="#c8d850" fontFamily="Liberation Sans">Dw</text></svg>, false],
  [<svg key="s" viewBox="0 0 18 18" className={S}><rect width="18" height="18" rx="1.5" fill="#4a4a4a" /><path d="M4 7 L14 3.5 V7 L4 10.5Z M4 10.5 L14 8 V11 L4 14.5Z" fill="#fb9a14" /></svg>, false],
  [<svg key="ps" viewBox="0 0 18 18" className={S}><rect x="0.5" y="0.5" width="17" height="17" fill="#1d2a6c" stroke="#8cb4e0" /><text x="9" y="13" fontSize="10" fontWeight="700" textAnchor="middle" fill="#8fc4f0" fontFamily="Liberation Sans">Ps</text></svg>, true],
  [<svg key="ai" viewBox="0 0 18 18" className={S}><rect x="0.5" y="0.5" width="17" height="17" fill="#3a1e08" stroke="#f09a20" /><text x="9" y="13" fontSize="10" fontWeight="700" textAnchor="middle" fill="#f09a20" fontFamily="Liberation Sans">Ai</text></svg>, false],
  [<svg key="x" viewBox="0 0 18 18" className={S}><rect x="9" y="2" width="9" height="14" fill="#fff" stroke="#2a7a4a" /><path d="M12 2 V16 M15 2 V16" stroke="#2a7a4a" strokeWidth="0.7" /><rect x="0" y="1" width="11" height="16" fill="#1e7a44" /><text x="5.5" y="13" fontSize="10" fontWeight="700" textAnchor="middle" fill="#fff" fontFamily="Liberation Sans">X</text></svg>, false],
  [<svg key="w" viewBox="0 0 18 18" className={S}><path d="M1 8 L11 3 L16 10 L6 16Z" fill="#e8d8a0" stroke="#6a5a30" /><path d="M8 11 L16 2 L18 4 L10 12 L7 13Z" fill="#2860d8" /></svg>, false],
  [<svg key="b" viewBox="0 0 18 18" className={S}><path d="M8.5 8 C6 2 1 1 0.5 3 C0 6 3 10 6 10 C3 11 3 16 6 16 C8 16 8.5 12 8.5 8Z M9.5 8 C12 2 17 1 17.5 3 C18 6 15 10 12 10 C15 11 15 16 12 16 C10 16 9.5 12 9.5 8Z" fill="#e8711c" stroke="#3a1a08" strokeWidth="0.8" /></svg>, false],
  [<svg key="sc" viewBox="0 0 18 18" className={S} fill="none"><ellipse cx="8" cy="6" rx="7" ry="4.5" stroke="#ee7a88" strokeWidth="1.2" transform="rotate(-15 8 6)" /><path d="M7 3 L12 13 M13 3 L8 13" stroke="#777" /><circle cx="13" cy="15" r="2" stroke="#2288dd" strokeWidth="1.3" /><circle cx="7" cy="15" r="2" stroke="#2288dd" strokeWidth="1.3" /></svg>, false],
  [<svg key="pa" viewBox="0 0 18 18" className={S}><ellipse cx="8" cy="11" rx="7.5" ry="6" fill="#d8e4ec" stroke="#8ca0ac" /><circle cx="4" cy="10" r="1.3" fill="#e04040" /><circle cx="7" cy="7.5" r="1.3" fill="#40a0e0" /><circle cx="5" cy="14" r="1.3" fill="#50b050" /><path d="M9 12 L16 1" stroke="#b08030" strokeWidth="2" /></svg>, false],
  [<svg key="z" viewBox="0 0 18 18" className={S}><rect y="2" width="18" height="14" fill="#222" /><rect x="2" y="4" width="14" height="10" fill="#f4f4f4" /><text x="9" y="12.5" fontSize="9" fontWeight="700" textAnchor="middle" fill="#111" fontFamily="Liberation Sans">7z</text></svg>, false],
  [<svg key="sk" viewBox="0 0 18 18" className={S}><circle cx="9" cy="9" r="8.5" fill="#0aa0e8" /><text x="9" y="13.5" fontSize="12" fontWeight="700" textAnchor="middle" fill="#fff" fontFamily="Liberation Sans">S</text></svg>, false],
  [<svg key="zo" viewBox="0 0 18 18" className={S}><rect width="18" height="18" rx="6" fill="#3d8cf5" /><rect x="3" y="6" width="8" height="6.5" rx="1" fill="#fff" /><path d="M12 8.5 L15 6.5 V12 L12 10Z" fill="#fff" /></svg>, false],
  [<svg key="wm" viewBox="0 0 18 18" className={S}><path d="M3 1 L15 2 V17 L3 16Z" fill="#b4dcf0" /><circle cx="8" cy="9" r="5" fill="#f08028" /><path d="M6.5 6.5 L11 9 L6.5 11.5Z" fill="#fff" /></svg>, false],
  [<svg key="v" viewBox="0 0 18 18" className={S}><path d="M7.5 1 H10.5 L15 15 H3Z" fill="#f08a10" /><path d="M6 7 H12 L12.8 10 H5Z" fill="#f4f4f4" /><rect x="1" y="14" width="16" height="3.5" rx="1" fill="#e87a08" /></svg>, false],
  [<svg key="pu" viewBox="0 0 18 18" className={S}><path d="M6 1 C9 5 10 5 12 3 L11 7 C15 7 16 11 15 14 C13 17 6 18 3 15 C1 12 6 10 7 8 C6 5 6 3 6 1Z" fill="#a030d8" /></svg>, false],
  [<svg key="nt" viewBox="0 0 18 18" className={S}><rect width="18" height="18" rx="1" fill="#1a5ac8" /><text x="9" y="14" fontSize="13" textAnchor="middle" fill="#101a50" fontFamily="DejaVu Sans">♪</text></svg>, false],
  [<svg key="br" viewBox="0 0 18 18" className={S}><circle cx="9" cy="9" r="8.5" fill="#14b8a8" stroke="#0a4a48" /><path d="M4 5 V13 M7 3 V15 M10 6 H14 M10 9 H14 M10 12 H14 M10 6 V13" stroke="#053432" fill="none" /></svg>, false],
  [<svg key="r" viewBox="0 0 18 18" className={S}><circle cx="9" cy="9" r="8.5" fill="#222" stroke="#ddd" /><circle cx="9" cy="9" r="5" fill="#e0182c" /></svg>, false],
  [<svg key="be" viewBox="0 0 18 18" className={S}><circle cx="9" cy="10" r="8" fill="#f4a81c" /><circle cx="9" cy="6" r="3.8" fill="#9a6428" /><circle cx="5.5" cy="3" r="1.3" fill="#7a4c18" /><circle cx="12.5" cy="3" r="1.3" fill="#7a4c18" /><path d="M1 11 H17" stroke="#fff2b0" /></svg>, false],
  [<svg key="st" viewBox="0 0 18 18" className={S}><rect width="18" height="18" rx="1" fill="#3a3a3a" /><path d="M8 17 L8 11 H17 Z" fill="#f8d820" /></svg>, false],
];

function TaskIcon({ icon, active, ps }: { icon: React.ReactNode; active: boolean; ps: boolean }) {
  return (
    <div className={(ps ? "bg-[#dcecf0] " : "") + (active ? "border-b-2 border-[#0a78d4] " : "border-b-2 border-transparent ") + "w-[30.1px] h-full flex items-center justify-center shrink-0"}>
      {icon}
    </div>
  );
}

const Tray = ({ children }: { children: React.ReactNode }) => (
  <div className="w-[18.5px] flex justify-center items-center">{children}</div>
);

function Taskbar() {
  return (
    <div className="h-[31px] bg-[#c6dfe5] flex items-center text-[#222]">
      <div className="w-[38px] flex justify-center">
        <svg viewBox="0 0 13 13" className="w-[13px] h-[13px]"><path d="M0 2 L5.5 1 V6 H0Z M6.5 1 L13 0 V6 H6.5Z M0 7 H5.5 V12 L0 11Z M6.5 7 H13 V13 L6.5 12Z" fill="#0c0c0c" /></svg>
      </div>
      <div className="w-[38px] flex justify-center">
        <svg viewBox="0 0 14 14" className="w-[14px] h-[14px]" fill="none" stroke="#222" strokeWidth="1.1"><circle cx="8.5" cy="5.5" r="4.5" /><path d="M5.3 8.7 L1 13" /></svg>
      </div>
      <div className="w-[38px] flex justify-center">
        <div className="w-[12px] h-[12px] rounded-full border-[2.5px] border-[#111]" />
      </div>
      <div className="h-full flex">
        {task.map(([ic, a], i) => <TaskIcon key={i} icon={ic} active={a} ps={i === 11} />)}
      </div>
      <div className="ml-[2px] flex items-center">
        <Tray><svg viewBox="0 0 12 7" className="w-[11px] h-[6px]" fill="none" stroke="#222"><path d="M1 6 L6 1 L11 6" /></svg></Tray>
        <Tray><svg viewBox="0 0 12 14" className="w-[11px] h-[13px]" fill="none" stroke="#222"><rect x="1" y="2" width="8" height="9" rx="2" /><path d="M10 5 L12 4 V9 L10 8" /></svg></Tray>
        <Tray><svg viewBox="0 0 14 10" className="w-[13px] h-[9px]"><rect x="1" y="2" width="12" height="7" fill="#222" /><path d="M0 0 L3 3" stroke="#222" /></svg></Tray>
        <Tray><svg viewBox="0 0 13 10" className="w-[13px] h-[10px]" fill="none" stroke="#222"><path d="M1 3.5 H3 L6 1 V9 L3 6.5 H1Z M8.5 3 L12 7 M12 3 L8.5 7" /></svg></Tray>
        <Tray><svg viewBox="0 0 12 12" className="w-[12px] h-[12px]" fill="none" stroke="#555"><path d="M1 11 A10 10 0 0 1 11 1 M4 11 A7 7 0 0 1 11 4 M7 11 A4 4 0 0 1 11 7" /></svg></Tray>
        <Tray><span className="text-[14px] leading-none [font-family:'Liberation_Sans',sans-serif]">A</span></Tray>
      </div>
      <div className="ml-[2px] w-[56px] flex flex-col items-center text-[9.5px] leading-[13px] text-[#333] [font-family:'Liberation_Sans',sans-serif]">
        <span>11:11</span>
        <span>2021/08/19</span>
      </div>
      <div className="relative ml-[8px] w-[20px] h-[20px]">
        <svg viewBox="0 0 14 14" className="absolute left-[1px] top-[1px] w-[13px] h-[13px]"><path d="M0 0 H13 V9 H6 L3 12 V9 H0Z" fill="#111" /><path d="M3 3 H10 M3 6 H10" stroke="#c6dfe5" /></svg>
        <div className="absolute left-[9px] top-[8px] w-[10px] h-[10px] rounded-full bg-[#e4eef0] border border-[#888] flex items-center justify-center text-[7px] leading-none [font-family:'Liberation_Sans',sans-serif]">2</div>
      </div>
    </div>
  );
}

export default function App() {
  return (
    <div className="relative w-[1200px] h-[674px] overflow-hidden flex flex-col bg-[#282828] [font-family:'Noto_Sans_CJK_JP','Noto_Sans',sans-serif]">
      <MenuBar />
      <Options />
      <div className="flex-1 flex min-h-0">
        <div className="w-[1005px] flex flex-col">
          <div className="h-[12px] bg-[#3c3c3c] flex">
            <div className={J + " w-[126px] h-full bg-[#535353] flex items-center pl-[7px] leading-none text-[#b8b8b8] whitespace-nowrap"}>
              <span className="w-[106px]">名称未設定<span className={L}> 1 @ 50% (RGB/8) *</span></span>
              <span className="ml-[5px] text-[8px]">×</span>
            </div>
          </div>
          <div className="h-[11px] bg-[#2e2e2e] border-b border-[#505050] overflow-hidden relative">
            <div className="ml-[11px]"><HRuler /></div>
          </div>
          <div className="flex-1 flex min-h-0">
            <div className="bg-[#2e2e2e] border-r border-[#505050] overflow-hidden"><VRuler /></div>
            <div className="flex-1 pl-[191px] pt-[116px]">
              <div className="w-[599px] h-[337px] bg-white shadow-[0_1px_3px_#111]" />
            </div>
            <div className="w-[10px] bg-[#3a3a3a] border-l border-[#333]" />
          </div>
          <div className="h-[12px] bg-[#434343] border-t border-[#333] flex items-center text-[7px] tracking-[-0.9px] leading-none text-[#c4c4c4]">
            <span className={L + " ml-[8px] w-[23px]"}>50%</span>
            <div className="w-[15px] h-full bg-[#5e5e5e] flex items-center justify-center">
              <div className="w-[6px] h-[6px] rounded-full bg-[#c8c8c8]" />
            </div>
            <span className="ml-[16px] w-[94px] whitespace-nowrap">ファイル：<span className={L}>5.93M/0 bytes</span></span>
            <div className="w-0 h-0 border-y-[3px] border-y-transparent border-l-[5px] border-l-[#d0d0d0]" />
            <div className="ml-auto w-[10px] h-full bg-[#3a3a3a]" />
          </div>
        </div>
        <div className="flex-1 flex flex-col bg-[#444444] border-l border-[#2c2c2c]">
          <div className="h-[305px] flex flex-col">
            <div className="h-[7px] bg-[#3a3a3a] flex justify-end items-center pr-[3px]"><span className="text-[6px] leading-none text-[#aaa]">▸◂</span></div>
            <div className="h-[11px] bg-[#424242] flex items-center ml-[1px]">
              <Tab t="カラー" cls="w-[24px]" />
              <Tab t="スウォッチ" cls="w-[38px]" />
              <Tab t="コピーソース" cls="w-[43px]" />
              <Tab t="スタイル" on cls="w-[31px]" />
              <div className="ml-auto mr-[1px]"><PanelMenu /></div>
            </div>
            <div className="flex-1 flex">
              <div className="w-[183px]"><Styles /></div>
              <div className="flex-1 bg-[#4a4a4a]" />
            </div>
          </div>
          <Layers />
        </div>
      </div>
      <Taskbar />
      <Toolbar />
      <div className="absolute left-[10px] top-[420px] w-[51px] h-[50px] border-[5px] border-[#fff000]" />
      <div className="absolute left-[2px] top-[545px] w-[16px] h-[16px] bg-[#ee7cee] border border-[#f4b4f4] flex items-center justify-center text-[11px] leading-none text-[#111]">止</div>
      <HistoryChar />
      <Info />
    </div>
  );
}
